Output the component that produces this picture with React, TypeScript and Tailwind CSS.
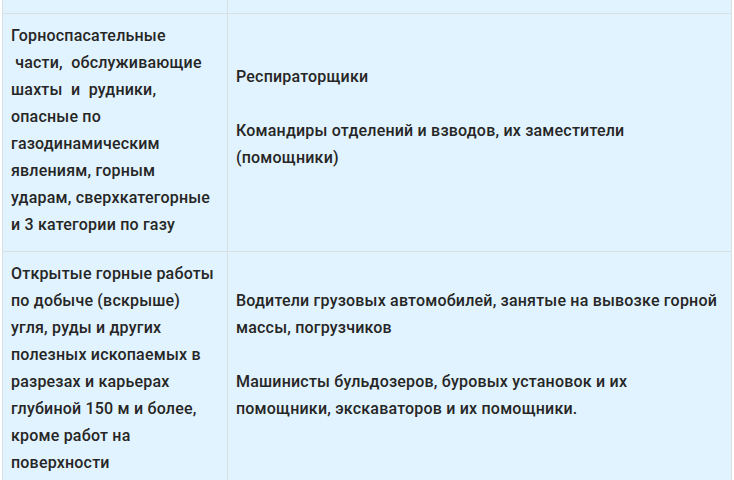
const rows = [
  {
    left: [
      "Горноспасательные",
      "\u00a0части,\u00a0 обслуживающие",
      "шахты\u00a0 и\u00a0 рудники,",
      "опасные по",
      "газодинамическим",
      "явлениям, горным",
      "ударам, сверхкатегорные",
      "и 3 категории по газу",
    ],
    right: [
      "Респираторщики",
      "Командиры отделений и взводов, их заместители (помощники)",
    ],
  },
  {
    left: [
      "Открытые горные работы",
      "по добыче (вскрыше)",
      "угля, руды и других",
      "полезных ископаемых в",
      "разрезах и карьерах",
      "глубиной 150 м и более,",
      "кроме работ на",
      "поверхности",
    ],
    right: [
      "Водители грузовых автомобилей, занятые на вывозке горной массы, погрузчиков",
      "Машинисты бульдозеров, буровых установок и их помощники, экскаваторов и их помощники.",
    ],
  },
];

export default function App() {
  return (
    <div className="w-[734px] h-[480px] overflow-hidden bg-white font-['Roboto',sans-serif] text-[16px] leading-[27px] font-medium tracking-[0.2px] text-[#262626]">
      <div className="ml-[2px] w-[730px] bg-[#e1f3fe] border-x border-[#d9e0e4]">
        {/* clipped row above */}
        <div className="grid grid-cols-[225px_1fr] h-[13px]">
          <div className="border-r border-[#d9e0e4]" />
          <div />
        </div>
        {rows.map((row, i) => (
          <div key={i} className="grid grid-cols-[225px_1fr] border-t border-[#d9e0e4]">
            <div className="border-r border-[#d9e0e4] pl-[8px] pr-[4px] pt-[8px] pb-[13px]">
              {row.left.map((line, k) => (
                <div key={k} className="whitespace-pre">
                  {line}
                </div>
              ))}
            </div>
            <div className="flex flex-col justify-center pl-[8px] pr-[8px] pt-[8px] pb-[13px]">
              {row.right.map((p, j) => (
                <p key={j} className="mb-[27px]">
                  {p}
                </p>
              ))}
            </div>
          </div>
        ))}
      </div>
    </div>
  );
}
